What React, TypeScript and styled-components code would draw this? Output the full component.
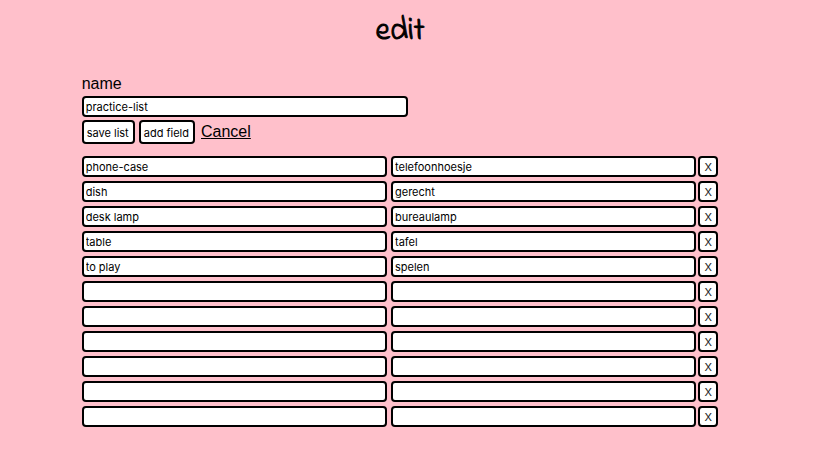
import { useState } from "react";
import styled, { createGlobalStyle } from "styled-components";

const GlobalStyle = createGlobalStyle`
  * { box-sizing: border-box; }
  body {
    margin: 0;
    background: #ffc0cb;
    color: #000;
    font: 16px/20px "Liberation Sans", Arial, sans-serif;
  }
`;

const Page = styled.main`
  padding: 0 10% 32px;
`;

const Title = styled.h1`
  margin: 0;
  padding: 12px 17px 22px 0;
  text-align: center;
  font: 400 32px/40px "Indie Flower", cursive;
  -webkit-text-stroke: 1px #000;
`;

const NameLabel = styled.label`
  display: block;
  margin-bottom: 2px;
`;

const TextInput = styled.input<{ $width?: string }>`
  display: block;
  width: ${(p) => p.$width ?? "100%"};
  min-width: 0;
  height: 21px;
  padding: 0 2px;
  border: 2px solid #000;
  border-radius: 4px;
  background: #fff;
  color: #000;
  font: 11px/15px "Inter", sans-serif;
`;

const Button = styled.button<{ $remove?: boolean }>`
  height: ${(p) => (p.$remove ? 21 : 24)}px;
  padding: ${(p) => (p.$remove ? "2px 0 0" : "2px 4px 0 3px")};
  border: 2px solid #000;
  border-radius: 4px;
  background: #fff;
  color: ${(p) => (p.$remove ? "#222" : "#000")};
  font: 11px/15px "Inter", sans-serif;
  white-space: nowrap;
`;

const Actions = styled.div`
  display: flex;
  align-items: center;
  gap: 4px;
  margin: 3px 0 12px;
`;

const CancelLink = styled.a`
  margin-left: 2px;
  color: #000;
`;

const WordList = styled.div`
  display: grid;
  gap: 4px;
  padding-right: 17px;
`;

const WordRow = styled.div`
  display: grid;
  grid-template-columns: 1fr 4px 1fr 2px 20px;

  & > :nth-child(2) { grid-column: 3; }
  & > :nth-child(3) { grid-column: 5; }
`;

type Entry = { id: number; word: string; translation: string };

const pairs = [
  ["phone-case", "telefoonhoesje"],
  ["dish", "gerecht"],
  ["desk lamp", "bureaulamp"],
  ["table", "tafel"],
  ["to play", "spelen"],
];

const initialEntries: Entry[] = Array.from({ length: 11 }, (_, id) => ({
  id,
  word: pairs[id]?.[0] ?? "",
  translation: pairs[id]?.[1] ?? "",
}));

export default function App() {
  const [entries, setEntries] = useState(initialEntries);

  const update = (id: number, change: Partial<Entry>) =>
    setEntries((all) => all.map((e) => (e.id === id ? { ...e, ...change } : e)));
  const remove = (id: number) => setEntries((all) => all.filter((e) => e.id !== id));
  const add = () =>
    setEntries((all) => [
      ...all,
      { id: Math.max(-1, ...all.map((e) => e.id)) + 1, word: "", translation: "" },
    ]);

  return (
    <>
      <GlobalStyle />
      <Page>
        <Title>edit</Title>
        <form onSubmit={(e) => e.preventDefault()}>
          <NameLabel htmlFor="list-name">name</NameLabel>
          <TextInput id="list-name" $width="calc(50% - 1px)" defaultValue="practice-list" />
          <Actions>
            <Button type="submit">save list</Button>
            <Button type="button" onClick={add}>add field</Button>
            <CancelLink href="#">Cancel</CancelLink>
          </Actions>
          <WordList>
            {entries.map((e) => (
              <WordRow key={e.id}>
                <TextInput
                  aria-label="Word"
                  value={e.word}
                  onChange={(ev) => update(e.id, { word: ev.target.value })}
                />
                <TextInput
                  aria-label="Translation"
                  value={e.translation}
                  onChange={(ev) => update(e.id, { translation: ev.target.value })}
                />
                <Button $remove type="button" onClick={() => remove(e.id)}>
                  X
                </Button>
              </WordRow>
            ))}
          </WordList>
        </form>
      </Page>
    </>
  );
}
